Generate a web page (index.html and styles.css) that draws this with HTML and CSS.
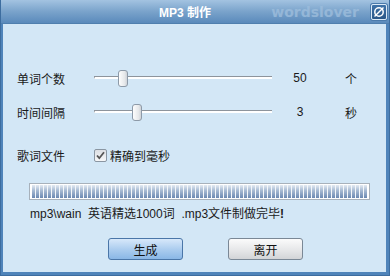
FILE: index.html
```html
<!DOCTYPE html>
<html lang="zh-CN">
<head>
  <meta charset="UTF-8" />
  <meta name="viewport" content="width=device-width, initial-scale=1" />
  <title>MP3 制作</title>
  <link rel="stylesheet" href="styles.css">
</head>
<body>
  <div class="window">
    <div class="titlebar">
      <span class="title">MP3 制作</span>
      <span class="brand">wordslover</span>
      <span class="close">
        <svg width="12" height="12" viewBox="0 0 12 12">
          <circle cx="6" cy="6" r="4.2" fill="none" stroke="#fff" stroke-width="1.5" />
          <line x1="10.5" y1="1.5" x2="1.5" y2="10.5" stroke="#fff" stroke-width="1.5" />
        </svg>
      </span>
    </div>

    <div class="content">
      <div class="row">
        <span class="label">单词个数</span>
        <div class="slider">
          <div class="track"></div>
          <div class="thumb" style="left: 24px;"></div>
        </div>
        <span class="value">50</span>
        <span class="unit">个</span>
      </div>

      <div class="row row2">
        <span class="label">时间间隔</span>
        <div class="slider">
          <div class="track"></div>
          <div class="thumb" style="left: 38px;"></div>
        </div>
        <span class="value">3</span>
        <span class="unit">秒</span>
      </div>

      <div class="row row3">
        <span class="label">歌词文件</span>
        <label class="check">
          <span class="box">
            <svg width="11" height="11" viewBox="0 0 11 11">
              <path d="M2 5.5 L4.3 8.2 L9 2.2" fill="none" stroke="#555" stroke-width="1.8" />
            </svg>
          </span>
          精确到毫秒
        </label>
      </div>

      <div class="progress"><div class="fill"></div></div>

      <div class="status">mp3\wain&nbsp; 英语精选1000词 &nbsp;.mp3文件制做完毕<b>!</b></div>

      <div class="buttons">
        <button class="btn btn-primary">生成</button>
        <button class="btn">离开</button>
      </div>
    </div>
  </div>
</body>
</html>
```
FILE: styles.css
```css
html, body {
  margin: 0;
  padding: 0;
}
body {
  font-family: "Liberation Sans", "Noto Sans CJK SC", sans-serif;
  font-size: 12px;
  color: #1a1a1a;
  background: #d3e7f6;
}
.window {
  width: 390px;
  height: 276px;
  box-sizing: border-box;
  display: flex;
  flex-direction: column;
  border: 1px solid #3d6d9f;
  border-top: none;
}
.titlebar {
  height: 23px;
  flex-shrink: 0;
  display: flex;
  align-items: center;
  position: relative;
  background: linear-gradient(#a3c3e1, #7aa3cb 50%, #5a8abb);
  border-bottom: 1px solid #4f7fae;
}
.title {
  position: absolute;
  left: 0;
  right: 0;
  text-align: center;
  color: #fff;
  font-weight: bold;
  font-size: 12px;
  padding-right: 20px;
}
.brand {
  margin-left: auto;
  margin-right: 12px;
  font-family: "DejaVu Sans", sans-serif;
  font-weight: bold;
  font-size: 14px;
  color: #9dbddc;
  opacity: 0.8;
}
.close {
  width: 14px;
  height: 14px;
  margin-right: 2px;
  display: flex;
  align-items: center;
  justify-content: center;
  background: linear-gradient(#3f72a8, #2a5788);
  border: 1px solid #dbe9f6;
  box-shadow: 0 0 0 1px #4a7aab;
  border-radius: 2px;
}
.content {
  flex: 1;
  display: flex;
  flex-direction: column;
  padding: 44px 0 0 14px;
  border-left: 2px solid #4f84ba;
  border-right: 3px solid #4f84ba;
  border-bottom: 3px solid #4f84ba;
}
.row {
  display: grid;
  grid-template-columns: 77px 178px 56px 46px;
  align-items: center;
  height: 20px;
}
.row2 {
  margin-top: 14px;
}
.row3 {
  margin-top: 23px;
}
.slider {
  position: relative;
  height: 20px;
}
.track {
  position: absolute;
  left: 0;
  right: 0;
  top: 8px;
  height: 1px;
  background: #8d949c;
  border-bottom: 2px solid #fff;
  border-left: 1px solid #8d949c;
}
.thumb {
  position: absolute;
  top: 2px;
  width: 8px;
  height: 15px;
  border: 1px solid #8d9aa8;
  border-radius: 3px;
  background: linear-gradient(90deg, #fdfdfd, #e6e8ea 70%, #cfd3d8);
}
.value, .unit {
  text-align: center;
}
.check {
  grid-column: 2 / span 3;
  display: flex;
  align-items: center;
  gap: 3px;
}
.box {
  width: 11px;
  height: 11px;
  border: 1px solid #8a96a2;
  border-radius: 2px;
  background: linear-gradient(#dcdfe3, #f6f7f8);
  display: flex;
  align-items: center;
  justify-content: center;
}
.progress {
  margin: 18px 0 0 12px;
  width: 335px;
  height: 13px;
  border: 1px solid #a7b1bb;
  background: #fff;
  padding: 1px 2px;
}
.fill {
  height: 100%;
  background:
    repeating-linear-gradient(90deg, transparent 0 3px, #f4f7fa 3px 4px),
    linear-gradient(#e4ebf3, #a9bcd4 40%, #6b89b2);
}
.status {
  margin: 7px 0 0 13px;
  height: 15px;
  line-height: 15px;
}
.buttons {
  display: flex;
  gap: 45px;
  margin: 16px 0 0 91px;
}
.btn {
  width: 75px;
  height: 22px;
  font-family: inherit;
  font-size: 12px;
  color: #111;
  border: 1px solid #7a8896;
  border-radius: 3px;
  background: linear-gradient(#fbfbfb, #e4e5e7 60%, #d2d4d7);
  padding: 0;
}
.btn-primary {
  border-color: #4a76a8;
  background: linear-gradient(#d7e8fa, #a9cbee 55%, #8ab7e6);
}
```
